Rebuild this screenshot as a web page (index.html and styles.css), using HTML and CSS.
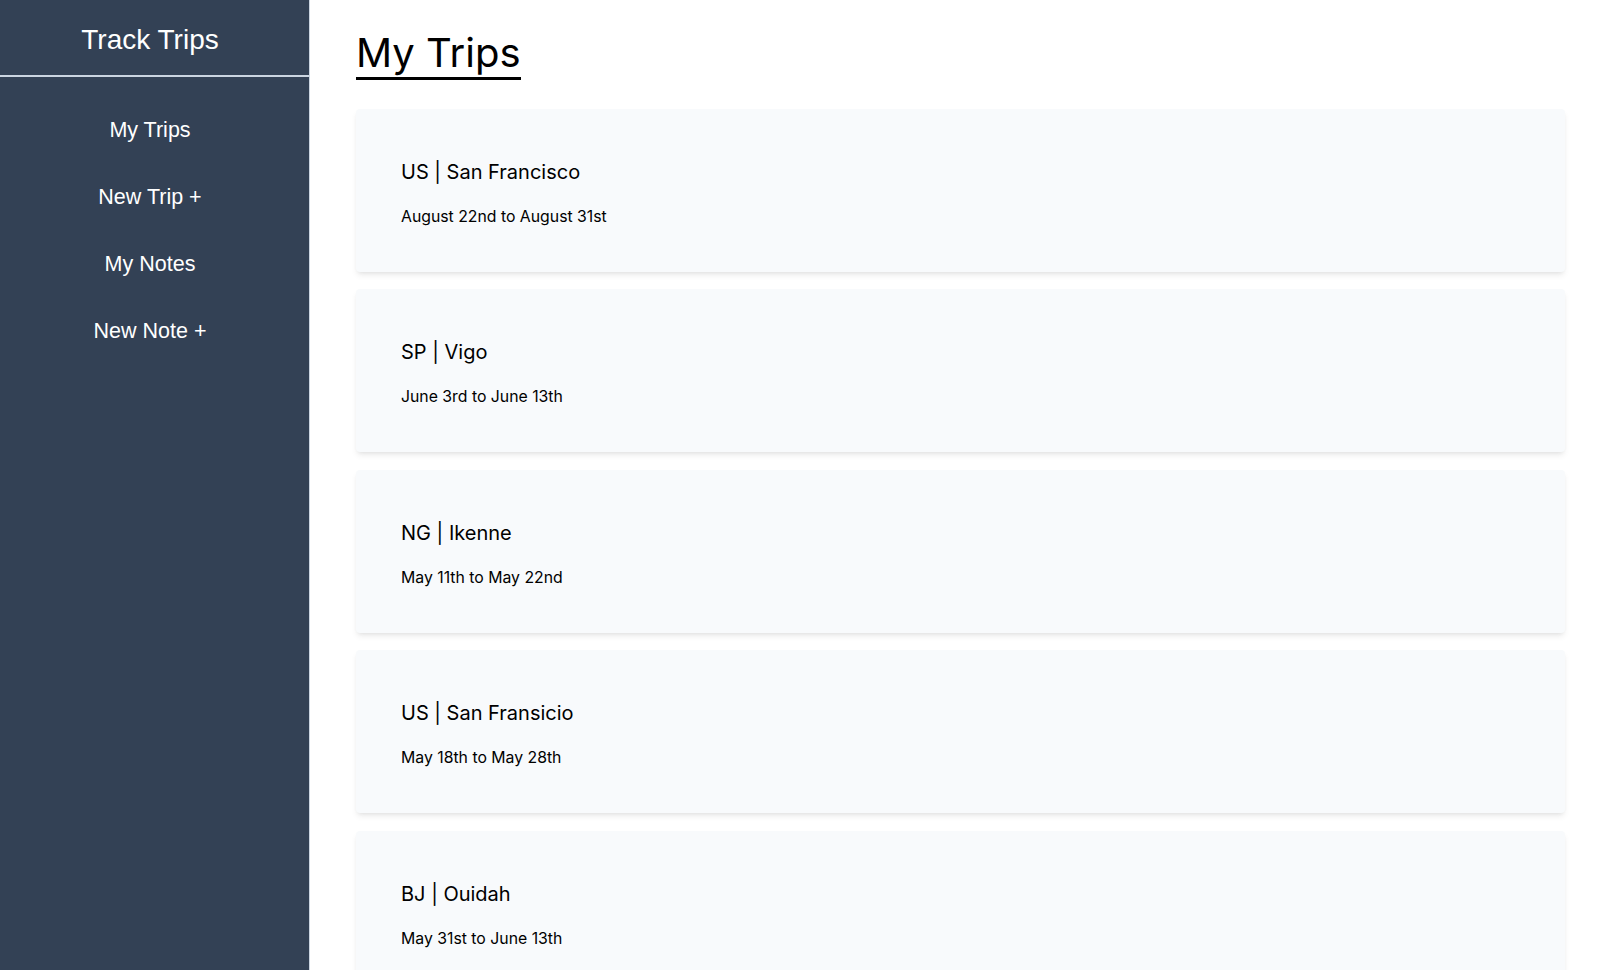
FILE: index.html
```html
<!DOCTYPE html>
<html lang="en">
<head>
<meta charset="utf-8">
<title>Track Trips</title>
<link rel="stylesheet" href="styles.css">
</head>
<body>
<div class="app">
  <aside class="sidebar">
    <div class="brand">Track Trips</div>
    <nav class="nav">
      <a class="nav-link" href="#">My Trips</a>
      <a class="nav-link" href="#">New Trip +</a>
      <a class="nav-link" href="#">My Notes</a>
      <a class="nav-link" href="#">New Note +</a>
    </nav>
  </aside>
  <main class="main">
    <h1 class="page-title">My Trips</h1>
    <div class="trip-list">
      <div class="trip-card">
        <div class="trip-title">US | San Francisco</div>
        <div class="trip-dates">August 22nd to August 31st</div>
      </div>
      <div class="trip-card">
        <div class="trip-title">SP | Vigo</div>
        <div class="trip-dates">June 3rd to June 13th</div>
      </div>
      <div class="trip-card">
        <div class="trip-title">NG | Ikenne</div>
        <div class="trip-dates">May 11th to May 22nd</div>
      </div>
      <div class="trip-card">
        <div class="trip-title">US | San Fransicio</div>
        <div class="trip-dates">May 18th to May 28th</div>
      </div>
      <div class="trip-card">
        <div class="trip-title">BJ | Ouidah</div>
        <div class="trip-dates">May 31st to June 13th</div>
      </div>
    </div>
  </main>
</div>
</body>
</html>
```

FILE: styles.css
```css
* { box-sizing: border-box; }
html, body { margin: 0; padding: 0; }
body {
  font-family: Inter, "Liberation Sans", sans-serif;
  color: #000;
  background: #fff;
  height: 970px;
  overflow: hidden;
}
.app {
  display: flex;
  min-height: 970px;
}
.sidebar {
  width: 310px;
  flex: 0 0 310px;
  background: #334155;
  border-right: 1px solid #cbd5e1;
  font-family: "Liberation Sans", Arial, sans-serif;
  color: #fff;
  display: flex;
  flex-direction: column;
}
.brand {
  height: 77px;
  font-size: 28px;
  text-align: center;
  padding: 24px 9px 0 0;
  line-height: 32px;
  border-bottom: 2px solid #cbd5e1;
}
.nav {
  display: flex;
  flex-direction: column;
  align-items: center;
  padding: 40.5px 9px 0 0;
  gap: 43.3px;
}
.nav-link {
  color: #fff;
  text-decoration: none;
  font-size: 21.5px;
  line-height: 24px;
}
.main {
  flex: 1;
  padding: 28px 35px 0 46px;
}
.page-title {
  display: inline-block;
  margin: 0;
  font-size: 40px;
  font-weight: 400;
  line-height: 49px;
  border-bottom: 3px solid #000;
}
.trip-list {
  display: flex;
  flex-direction: column;
  gap: 17.4px;
  margin-top: 29px;
}
.trip-card {
  background: #f8fafc;
  border-radius: 4px;
  height: 163px;
  padding: 49px 45px 0;
  box-shadow: 0 4px 6px -1px rgba(0,0,0,0.08), 0 2px 4px -2px rgba(0,0,0,0.08);
  flex: 0 0 auto;
}
.trip-title {
  font-size: 20px;
  line-height: 28px;
}
.trip-dates {
  margin-top: 19px;
  font-size: 15.8px;
  line-height: 24px;
}
```
